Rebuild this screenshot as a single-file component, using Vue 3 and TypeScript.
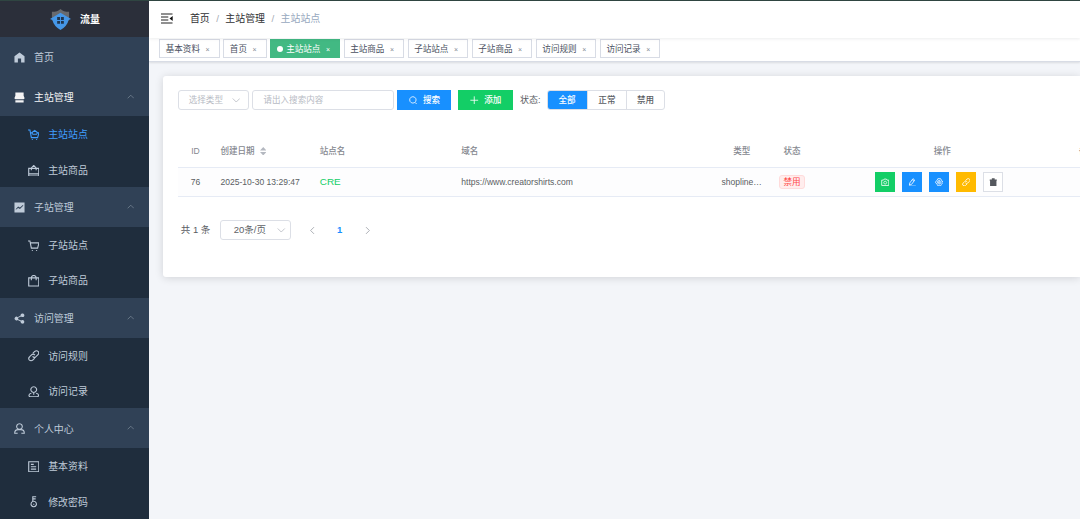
<script setup lang="ts">
import { h, ref, type FunctionalComponent } from 'vue'

interface Glyph { d: string; solid?: boolean }
interface MenuItem { label: string; icon: string }
interface MenuGroup extends MenuItem { children: MenuItem[]; active?: boolean }

const glyphs: Record<string, Glyph> = {
  home: { solid: true, d: 'M12 1 23 9V23H15.5V14H8.5V23H1V9Z' },
  shop: { solid: true, d: 'M3 1H21V8L23 13Q23 16 20 16H4Q1 16 1 13L3 8ZM3 18H21V23H3Z' },
  cartFull: { d: 'M0 2H4L7 18H20L23 8H19M5 8H9M9 10V7L14 3L19 7V10M9 11H19M8 22H10M17 22H19' },
  cart: { d: 'M0 2H4L7 17H20L23 6H5M8 22H10M17 22H19' },
  handbag: { d: 'M1.5 7H22.5V23H1.5ZM7 11V6L12 1L17 6V11M2 18.5H22' },
  bag: { d: 'M1.5 6H22.5V23H1.5ZM7 11V6Q7 1 12 1Q17 1 17 6V11' },
  trend: { solid: true, d: 'M1 1H23V23H1ZM4 17 9 13 13 15 20 8V6L13 12 9 10 4 15Z' },
  share: { solid: true, d: 'M19 1A4 4 0 1 1 15.5 7.5L9 10.5V13.5L15.5 16.5A4 4 0 1 1 14.5 18.5L8 15A4 4 0 1 1 8 9L14.5 5.5A4 4 0 0 1 19 1Z' },
  link: { d: 'M10 7 14 3Q18 0 21.5 3.5Q24 7 20.5 10L16 14.5Q12.5 17 9.5 13.5M14 17 10 21Q6 24 2.5 20.5Q0 17 3.5 14L8 9.5Q11.5 7 14.5 10.5' },
  visitor: { d: 'M12 1.5A6 6 0 1 1 11.9 1.5M12 13V18M7 15Q2 16 2 19.5Q2 22.5 5 22.5H19Q22 22.5 22 19.5Q22 16 17 15' },
  user: { d: 'M12 1.5A6.2 6.2 0 1 1 11.9 1.5M8 22.5H1.5Q1.5 14.5 9 14.5H15Q22.5 14.5 22.5 22.5H16' },
  document: { d: 'M1.5 1.5H22.5V22.5H1.5ZM6 7H12M6 12H17M6 17H17' },
  key: { d: 'M12 11A5.7 5.7 0 1 1 11.9 11M10 12V1.5H17M10 6H16M12 16V18' },
  up: { d: 'M2 17 12 7 22 17' },
  down: { d: 'M2 7 12 17 22 7' },
  left: { d: 'M16 3 7 12 16 21' },
  right: { d: 'M8 3 17 12 8 21' },
  search: { d: 'M11 2A9 9 0 1 1 10.9 2M17 18 22 23' },
  plus: { d: 'M12 1V23M1 12H23' },
  camera: { d: 'M2 6H7L9 3H15L17 6H22V21H2ZM12 9A4 4 0 1 1 11.9 9' },
  edit: { d: 'M5 14 14 2 19 6 10 18 4 20ZM12 5 17 9M3 23H22' },
  gear: { d: 'M8 2H16L18 6L23 12L18 18L16 22H8L6 18L1 12L6 6ZM12 7A5 5 0 1 1 11.9 7M12 10A2 2 0 1 1 11.9 10' },
  trash: { solid: true, d: 'M8 1H16V4H22V8H21V23H3V8H2V4H8Z' },
}

const Icon: FunctionalComponent<{ name: string }> = (props) => {
  const g = glyphs[props.name]
  return h('svg', { viewBox: '0 0 24 24', 'aria-hidden': 'true' }, [
    h('path', {
      d: g.d,
      fill: g.solid ? 'currentColor' : 'none',
      'fill-rule': 'evenodd',
      stroke: g.solid ? 'none' : 'currentColor',
      'stroke-width': 2.3,
    }),
  ])
}
Icon.props = ['name']

const groups: MenuGroup[] = [
  { label: '主站管理', icon: 'shop', active: true, children: [{ label: '主站站点', icon: 'cartFull' }, { label: '主站商品', icon: 'handbag' }] },
  { label: '子站管理', icon: 'trend', children: [{ label: '子站站点', icon: 'cart' }, { label: '子站商品', icon: 'bag' }] },
  { label: '访问管理', icon: 'share', children: [{ label: '访问规则', icon: 'link' }, { label: '访问记录', icon: 'visitor' }] },
  { label: '个人中心', icon: 'user', children: [{ label: '基本资料', icon: 'document' }, { label: '修改密码', icon: 'key' }] },
]
const tabs = ['基本资料', '首页', '主站站点', '主站商品', '子站站点', '子站商品', '访问规则', '访问记录']
const current = ref('主站站点')
const states = ['全部', '正常', '禁用']
const state = ref('全部')
const actions = [
  { icon: 'camera', tone: 'green' },
  { icon: 'edit', tone: 'blue' },
  { icon: 'gear', tone: 'blue' },
  { icon: 'link', tone: 'amber' },
  { icon: 'trash', tone: 'plain' },
]
</script>

<template>
  <div class="app">
    <aside class="sidebar">
      <div class="logo">
        <svg class="shield" viewBox="0 0 22 22">
          <path d="M2 3Q8 3 11 0Q14 3 20 3V12H2Z" fill="#686a6e" />
          <path d="M11 4 22 10.5 19.5 11.5Q18 18 11 22Q4 18 2.5 11.5L0 10.5Z" fill="#4597e8" />
          <path d="M7.5 8.5H10.5V11.5H7.5ZM11.5 8.5H14.5V11.5H11.5ZM7.5 12.5H10.5V15.5H7.5ZM11.5 12.5H14.5V15.5H11.5Z" fill="#20364f" />
        </svg>
        <b>流量</b>
      </div>
      <nav>
        <div class="entry"><Icon name="home" class="ico" /><span>首页</span></div>
        <template v-for="g in groups" :key="g.label">
          <div class="entry" :class="{ open: g.active }">
            <Icon :name="g.icon" class="ico" /><span>{{ g.label }}</span><Icon name="up" class="caret" />
          </div>
          <div class="sub">
            <div v-for="c in g.children" :key="c.label" class="subentry" :class="{ active: c.label === current }">
              <Icon :name="c.icon" class="ico" /><span>{{ c.label }}</span>
            </div>
          </div>
        </template>
      </nav>
    </aside>

    <main class="main">
      <header class="navbar">
        <svg class="burger" viewBox="0 0 12 11">
          <path d="M0 1H11.5M0 4H7.3M0 7H7.3M0 10H11.5" stroke="#222" stroke-width="1.1" />
          <path d="M11.7 3V8L8.5 5.5Z" fill="#111" />
        </svg>
        <span class="crumb">首页</span><i>/</i><span class="crumb">主站管理</span><i>/</i><span class="crumb last">主站站点</span>
      </header>
      <div class="tabs">
        <div v-for="t in tabs" :key="t" class="tab" :class="{ on: t === current }">
          <span v-if="t === current" class="dot"></span><span class="txt">{{ t }}</span><span class="x">×</span>
        </div>
      </div>

      <section class="card">
        <div class="filters">
          <div class="box type"><span>选择类型</span><Icon name="down" class="arrow" /></div>
          <div class="box keyword">请出入搜索内容</div>
          <button class="btn blue search"><Icon name="search" />搜索</button>
          <button class="btn green add"><Icon name="plus" />添加</button>
          <span class="label">状态:</span>
          <div class="radio">
            <span v-for="s in states" :key="s" :class="{ on: s === state }" @click="state = s">{{ s }}</span>
          </div>
        </div>

        <div class="table">
          <div class="row head">
            <span class="mid">ID</span>
            <span class="cell">创建日期<svg class="sort" viewBox="0 0 7 9"><path d="M3.5 0 7 3.8H0ZM0 5.2H7L3.5 9Z" fill="#b4b8c0" /></svg></span>
            <span class="cell">站点名</span><span class="cell">域名</span>
            <span class="mid">类型</span><span class="mid">状态</span><span class="mid">操作</span><span class="cell more">备注</span>
          </div>
          <div class="row body">
            <span class="mid">76</span>
            <span class="cell">2025-10-30 13:29:47</span>
            <span class="cell name">CRE</span>
            <span class="cell">https://www.creatorshirts.com</span>
            <span class="mid">shopline…</span>
            <span class="mid"><em class="tag">禁用</em></span>
            <span class="mid ops">
              <button v-for="(a, i) in actions" :key="i" class="op" :class="a.tone"><Icon :name="a.icon" /></button>
            </span>
            <span></span>
          </div>
        </div>

        <div class="pager">
          <span class="total">共 1 条</span>
          <div class="box size"><span>20条/页</span><Icon name="down" class="arrow" /></div>
          <Icon name="left" class="step" /><b>1</b><Icon name="right" class="step" />
        </div>
      </section>
    </main>
  </div>
</template>

<style>
body { margin: 0; overflow: hidden; }
</style>

<style scoped>
* { box-sizing: border-box; }
.app {
  display: flex; width: 1080px; height: 519px; overflow: hidden; background: #f3f5f9;
  border-top: 1px solid #2f4541;
  font: 8.55px/1 "Liberation Sans", "Noto Sans CJK SC", sans-serif; color: #5a5d63;
}
svg { display: block; flex: none; }
.sidebar { flex: none; width: 148.7px; background: #304156; color: #bfcbd9; font-size: 9.94px; overflow: hidden; z-index: 2; }
.logo { height: 36px; display: flex; align-items: center; background: #2b2f3a; padding-left: 50px; color: #fff; }
.logo b { margin-left: 9px; padding-top: 1px; }
.shield { width: 21px; height: 21px; margin-top: 1px; }
.entry { height: 39.7px; display: flex; align-items: center; padding: 1.5px 0 0 13.5px; }
.entry .ico { width: 11px; height: 11px; margin-right: 9.5px; }
.entry span, .subentry span { padding-top: 1px; }
.entry.open { color: #f4f4f5; }
.caret { width: 7.5px; height: 7.5px; margin: -2px 14.5px 0 auto; color: #7e8b99; }
.sub { background: #1f2d3d; }
.subentry { height: 35.45px; display: flex; align-items: center; padding: 1.5px 0 0 27.5px; }
.subentry .ico { width: 11.5px; height: 11.5px; margin-right: 9.2px; }
.subentry.active { color: #409eff; }

.main { flex: none; width: 931.3px; }
.navbar { height: 37px; background: #fff; display: flex; align-items: center; padding: 0 0 1px 12px; font-size: 9.94px; box-shadow: 0 1px 3px rgba(0, 21, 41, .08); position: relative; }
.burger { width: 12px; height: 11px; margin: -1px 17.2px 0 0; }
.crumb { color: #303133; }
.crumb.last { color: #97a8be; }
.navbar i { width: 15.6px; text-align: center; font-style: normal; color: #a5abb5; }
.tabs { height: 23.5px; display: flex; align-items: center; gap: 3.5px; padding: 0 0 1px 10.5px; background: #fff; border-bottom: 1px solid #d8dce5; box-shadow: 0 1px 2px rgba(0, 0, 0, .1); }
.tab { height: 18.6px; display: flex; align-items: center; border: 1px solid #d8dce5; background: #fff; color: #495060; padding: 0 8.7px 0 5.6px; white-space: nowrap; }
.tab .txt { padding-top: 1px; }
.tab .x { font-size: 7px; margin-left: 5.6px; padding-top: 1px; width: 4.5px; color: #858b95; }
.tab.on { background: #42b983; border-color: #42b983; color: #fff; padding: 0 8.6px 0 5.6px; }
.tab.on .x { color: #fff; }
.dot { width: 6px; height: 6px; border-radius: 50%; background: #fff; margin-right: 3.4px; }

.card { margin: 14.5px 0 0 14.8px; height: 201px; padding: 14px 0 0 14.3px; background: #fff; border-radius: 3px 0 0 3px; box-shadow: 0 1px 8px rgba(0, 0, 0, .14); overflow: hidden; }
.filters { display: flex; align-items: center; height: 20px; }
.box { height: 20px; display: flex; align-items: center; border: 1px solid #dcdfe6; border-radius: 3px; color: #b7bbc4; }
.arrow { width: 8.5px; height: 8.5px; color: #b6bac2; margin-left: auto; }
.type { width: 71px; padding: 0 7.5px 0 10px; }
.keyword { width: 142px; margin-left: 3.2px; padding-left: 10.5px; }
button { font: inherit; border: 0; padding: 0; margin: 0; display: flex; align-items: center; justify-content: center; }
.btn { height: 20px; color: #fff; font-weight: 500; }
.btn svg { width: 8.5px; height: 8.5px; margin-right: 5.5px; }
.search { width: 54px; margin-left: 3.5px; }
.add { width: 55px; margin-left: 6.8px; }
.blue { background: #1890ff; color: #fff; }
.green { background: #13ce66; color: #fff; }
.amber { background: #ffba00; color: #fff; }
.label { margin-left: 6.8px; width: 27px; font-size: 9px; }
.radio { display: flex; height: 20px; border: 1px solid #dcdfe6; border-radius: 3px; overflow: hidden; width: 118.4px; }
.radio span { flex: 1; display: flex; align-items: center; justify-content: center; border-left: 1px solid #dcdfe6; font-weight: 500; }
.radio .on { flex: none; width: 40px; background: #1890ff; color: #fff; margin: -1px 0 -1px -1px; border: 0; }

.table { margin-top: 24.5px; width: 902px; }
.row { display: grid; grid-template-columns: 35.4px 99.3px 141.5px 259px 57.5px 43px 257.5px 1fr; align-items: center; border-bottom: 1px solid #e6ebf5; white-space: nowrap; }
.head { height: 33.5px; padding-top: 1px; color: #85888f; font-weight: 500; }
.body { height: 29px; background: #fdfdfe; }
.mid { display: flex; justify-content: center; }
.cell { display: flex; align-items: center; padding-left: 7.3px; }
.more { padding-left: 8px; }
.sort { width: 6.5px; height: 8.5px; margin-left: 5px; }
.name { font-size: 9.94px; color: #13ce66; }
.tag { font-style: normal; color: #ff4949; background: #ffeded; border: 1px solid #ffdbdb; border-radius: 3px; width: 25.5px; height: 14px; display: flex; align-items: center; justify-content: center; }
.ops { gap: 7px; padding-right: 6px; }
.op { width: 20px; height: 20px; }
.op svg { width: 8.5px; height: 8.5px; }
.plain { background: #fff; border: 1px solid #dcdfe6; color: #55585e; }

.pager { display: flex; align-items: center; margin-top: 23px; padding-left: 3px; font-size: 9.5px; }
.total { width: 39px; }
.size { width: 71.5px; padding: 0 4.5px 0 13px; color: #606266; }
.step { width: 9px; height: 9px; margin-left: 16.5px; color: #a0a3aa; }
.pager b { color: #1890ff; width: 5px; margin-left: 20.2px; }
.pager b + .step { margin-left: 20.9px; }
</style>
